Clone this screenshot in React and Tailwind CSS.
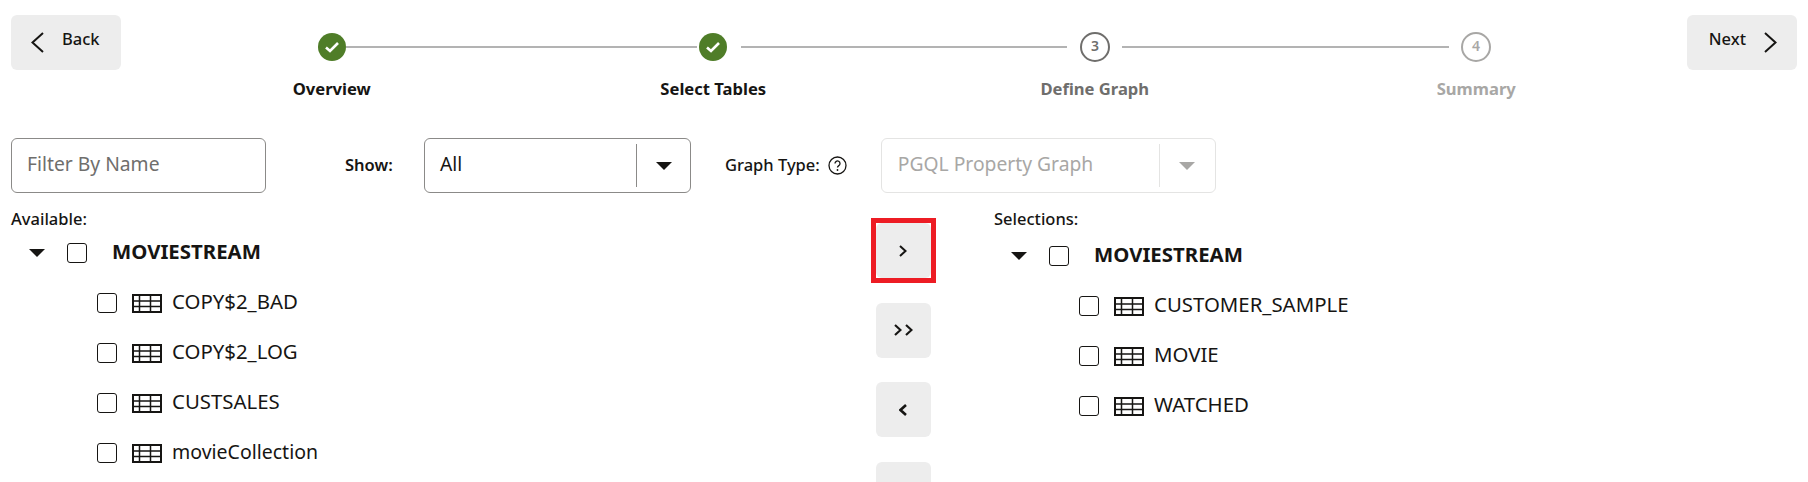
const availableTables = ["COPY$2_BAD", "COPY$2_LOG", "CUSTSALES", "movieCollection"];
const selectedTables = ["CUSTOMER_SAMPLE", "MOVIE", "WATCHED"];

const TableIcon = () => (
  <svg width="30" height="19" viewBox="0 0 30 19" fill="none" stroke="#161513" className="shrink-0">
    <rect x="1" y="1" width="28" height="17" strokeWidth="2" />
    <path d="M7.5 1v17M18.5 1v17M1 7h28M1 12.5h28" strokeWidth="1.5" />
  </svg>
);

const Caret = ({ color = "#161513" }) => (
  <svg width="16" height="8" viewBox="0 0 16 8" className="shrink-0">
    <path d="M0 0h16L8 8z" fill={color} />
  </svg>
);

// w/h are the size of the drawn chevron, it points right unless flipped
const Chevron = ({ w, h, stroke = 2, left = false }) => (
  <svg width={w} height={h} viewBox={`0 0 ${w} ${h}`} fill="none" stroke="#161513" strokeWidth={stroke} className="shrink-0">
    <path d={left ? `M${w - 1} 1L1.5 ${h / 2}L${w - 1} ${h - 1}` : `M1 1L${w - 1.5} ${h / 2}L1 ${h - 1}`} />
  </svg>
);

const Checkbox = () => (
  <span className="block w-5 h-5 shrink-0 rounded-[3px] border-[1.5px] border-[#161513] bg-white"></span>
);

const DoneStep = () => (
  <span className="flex items-center justify-center w-7 h-7 shrink-0 rounded-full bg-[#4f7d28]">
    <svg width="16" height="12" viewBox="0 0 16 12" fill="none" stroke="#fff" strokeWidth="2.6">
      <path d="M2 6.5l4 3.5 8-8" />
    </svg>
  </span>
);

const NumberStep = ({ n, className }) => (
  <span className={`flex items-center justify-center w-[30px] h-[30px] shrink-0 rounded-full border-2 text-[14px] font-semibold ${className}`}>
    <span className="-mt-[3px]">{n}</span>
  </span>
);

const MoveButton = ({ children }) => (
  <button className="flex items-center justify-center w-[55px] h-[55px] rounded-[6px] bg-[#ededed]">
    {children}
  </button>
);

const Tree = ({ tables }) => (
  <div>
    <div className="flex items-center h-[30px]">
      <span className="ml-[19px] w-4 flex"><Caret /></span>
      <span className="ml-[22px]"><Checkbox /></span>
      <span className="ml-[25px] text-[20.4px] font-bold leading-none -mt-[3px]">MOVIESTREAM</span>
    </div>
    <div className="mt-[10px]">
      {tables.map((name) => (
        <div key={name} className="flex items-center h-[50px] pl-[87px]">
          <Checkbox />
          <span className="ml-[15px]"><TableIcon /></span>
          <span className={`ml-[10px] leading-none -mt-[3px] ${name === name.toUpperCase() ? "text-[20.4px]" : "text-[19.5px]"}`}>{name}</span>
        </div>
      ))}
    </div>
  </div>
);

export default function App() {
  return (
    <div className="h-[482px] w-[1808px] overflow-hidden bg-white text-[#161513] font-['Noto_Sans',sans-serif]">
      <div className="flex pt-[15px] pl-[11px]">
        <button className="flex items-center w-[110px] h-[55px] rounded-[6px] bg-[#ededed] pl-[20px]">
          <Chevron w={13} h={21} left />
          <span className="ml-[18px] text-[16.5px] font-medium -mt-[6px]">Back</span>
        </button>

        <div className="w-[1566px]">
          <div className="flex items-center pl-[197px] pt-[17px]">
            <DoneStep />
            <span className="w-[351px] h-[2px] bg-[#b3b3b3]"></span>
            <span className="ml-[2px]"><DoneStep /></span>
            <span className="ml-[14px] w-[326px] h-[2px] bg-[#b3b3b3]"></span>
            <span className="ml-[13px]"><NumberStep n="3" className="border-[#6f6e6c] text-[#6f6e6c]" /></span>
            <span className="ml-[12px] w-[327px] h-[2px] bg-[#b3b3b3]"></span>
            <span className="ml-[12px]"><NumberStep n="4" className="border-[#a8a7a5] text-[#a8a7a5]" /></span>
          </div>
          <div className="grid grid-cols-4 w-[1526px] ml-[20px] mt-[15px] text-[16.6px] font-bold leading-[24px] text-center">
            <span>Overview</span>
            <span>Select Tables</span>
            <span className="text-[#6f6e6c]">Define Graph</span>
            <span className="text-[#a8a7a5]">Summary</span>
          </div>
        </div>

        <button className="flex items-center justify-end w-[110px] h-[55px] rounded-[6px] bg-[#ededed] pr-[20px]">
          <span className="mr-[18px] text-[16.5px] font-medium -mt-[6px]">Next</span>
          <Chevron w={13} h={21} />
        </button>
      </div>

      <div className="flex items-center mt-[37px] pl-[11px] text-[19.3px]">
        <div className="flex items-center w-[255px] h-[55px] rounded-[6px] border border-[#8b8a88] pl-[15px] text-[#6f6e6c]">
          <span className="-mt-[3px]">Filter By Name</span>
        </div>
        <span className="ml-[79px] w-[79px] text-[16.5px] font-semibold">Show:</span>
        <div className="flex items-center w-[267px] h-[55px] rounded-[6px] border border-[#8b8a88] pl-[15px]">
          <span className="flex-1 -mt-[3px]">All</span>
          <span className="w-px h-[43px] bg-[#8b8a88]"></span>
          <span className="w-[53px] flex justify-center"><Caret /></span>
        </div>
        <span className="ml-[34px] text-[16.5px] font-medium -mt-[1px]">Graph Type:</span>
        <svg width="19" height="19" viewBox="0 0 19 19" fill="none" className="ml-[8px]">
          <circle cx="9.5" cy="9.5" r="8.5" stroke="#161513" strokeWidth="1.3" />
          <path d="M7 7.5a2.5 2.5 0 1 1 3.8 2.1c-.9.6-1.3 1-1.3 2" stroke="#161513" strokeWidth="1.3" />
          <circle cx="9.5" cy="14" r=".9" fill="#161513" />
        </svg>
        <div className="ml-[34px] flex items-center w-[335px] h-[55px] rounded-[6px] border border-[#e4e4e3] pl-[16px] text-[#a8a7a5]">
          <span className="flex-1 -mt-[3px]">PGQL Property Graph</span>
          <span className="w-px h-[43px] bg-[#e4e4e3]"></span>
          <span className="w-[55px] flex justify-center"><Caret color="#a8a7a5" /></span>
        </div>
      </div>

      <div className="flex mt-[14px] pl-[11px]">
        <div className="w-[859px]">
          <div className="text-[16.5px] font-medium leading-[24px]">Available:</div>
          <div className="mt-[7px] -ml-[1px]">
            <Tree tables={availableTables} />
          </div>
        </div>
        <div className="w-[124px] flex flex-col items-center pr-[58px] mt-[16px] gap-[24.5px]">
          <div className="border-[5px] border-[#ed1c24] -my-[5px]">
            <MoveButton><Chevron w={8} h={12} /></MoveButton>
          </div>
          <MoveButton>
            <span className="flex gap-[3px]"><Chevron w={8} h={12} stroke={2.2} /><Chevron w={8} h={12} stroke={2.2} /></span>
          </MoveButton>
          <MoveButton><Chevron w={8} h={12} stroke={2.6} left /></MoveButton>
          <MoveButton>
            <span className="flex gap-[3px]"><Chevron w={8} h={12} stroke={2.2} left /><Chevron w={8} h={12} stroke={2.2} left /></span>
          </MoveButton>
        </div>
        <div>
          <div className="text-[16.5px] font-medium leading-[24px]">Selections:</div>
          <div className="mt-[10px] -ml-[2px]">
            <Tree tables={selectedTables} />
          </div>
        </div>
      </div>
    </div>
  );
}
